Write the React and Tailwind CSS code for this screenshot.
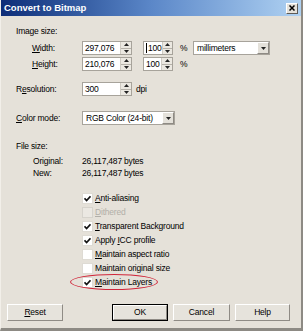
import React from "react";

const FONT = "font-['Liberation_Sans',Arial,sans-serif]";

function Tri({ down }) {
  return (
    <svg width="5" height="3" viewBox="0 0 5 3" className="block">
      <path d={down ? "M0 0H5L2.5 3Z" : "M0 3H5L2.5 0Z"} fill="#222" />
    </svg>
  );
}

function Spinner() {
  return (
    <div className="flex flex-col w-[11px] h-full border-l border-[#cfcbc3]">
      <div className="flex-1 flex items-center justify-center bg-[#ebe8e1] border-b border-[#b5b1a9]">
        <Tri />
      </div>
      <div className="flex-1 flex items-center justify-center bg-[#ebe8e1]">
        <Tri down />
      </div>
    </div>
  );
}

function SpinBox({ value, w, caret }) {
  return (
    <div className={`flex h-[14px] ${w} border border-[#a7a39b] bg-white`}>
      <div className="flex-1 flex items-center pl-[2px]">
        {caret && <span className="w-px h-[10px] bg-black mr-px" />}
        {value}
      </div>
      <Spinner />
    </div>
  );
}

function DropDown({ value, w }) {
  return (
    <div className={`flex h-[14px] ${w} border border-[#a7a39b] bg-white`}>
      <div className="flex-1 flex items-center pl-[3px]">{value}</div>
      <div className="w-[12px] h-full flex items-center justify-center bg-[#e4e1da] border border-t-white border-l-white border-r-[#8e8a84] border-b-[#8e8a84]">
        <Tri down />
      </div>
    </div>
  );
}

function U({ children }) {
  return <span className="underline underline-offset-[1px]">{children}</span>;
}

function Check({ checked, disabled, children }) {
  return (
    <div className="flex items-center h-[14px]">
      <div
        className={`w-[11px] h-[11px] flex items-center justify-center border ${
          disabled ? "bg-[#ebe8e2] border-[#d6d3cc]" : "bg-white border-[#dedbd4]"
        }`}
      >
        {checked && (
          <svg width="7" height="7" viewBox="0 0 7 7" className="block">
            <path d="M0.5 3.2L2.6 5.5L6.5 1.2" stroke="#111" strokeWidth="1.7" fill="none" />
          </svg>
        )}
      </div>
      <div className={`ml-[2px] ${disabled ? "text-[#b2afa8]" : ""}`}>{children}</div>
    </div>
  );
}

function Btn({ children, w, def }) {
  return (
    <div
      className={`h-[17px] ${w} flex items-center justify-center ${
        def ? "border border-black" : ""
      }`}
    >
      <div className="w-full h-full flex items-center justify-center bg-[#e6e3dc] border border-t-white border-l-white border-r-[#8f8b85] border-b-[#8f8b85]">
        {children}
      </div>
    </div>
  );
}

export default function App() {
  return (
    <div
      className={`${FONT} relative w-[303px] h-[331px] bg-[#e5e1d9] text-[8.5px] tracking-[-0.2px] leading-none whitespace-nowrap text-black flex flex-col border-r-2 border-b-[3px] border-r-[#8d8a84] border-b-[#8d8a84] border-l border-l-[#f2efe9] overflow-hidden`}
    >
      {/* Title bar */}
      <div className="h-[16px] flex items-center bg-gradient-to-r from-[#0e2d78] via-[#5b87c8] to-[#b0d2f2] pl-[3px] pr-[3px]">
        <div className="flex-1 text-white font-bold text-[9.5px] tracking-normal">
          Convert to Bitmap
        </div>
        <div className="w-[12px] h-[11px] flex items-center justify-center bg-[#e4e1da] border border-t-white border-l-white border-r-[#5e5b56] border-b-[#5e5b56]">
          <svg width="6" height="6" viewBox="0 0 6 6" className="block">
            <path d="M0.5 0.5L5.5 5.5M5.5 0.5L0.5 5.5" stroke="#000" strokeWidth="1.5" />
          </svg>
        </div>
      </div>

      <div className="flex flex-col pl-[15px]">
        <div className="mt-[10px] h-[11px] flex items-center">Image size:</div>

        <div className="mt-[4px] flex items-center">
          <div className="w-[66px] pl-[16px]">
            <U>W</U>idth:
          </div>
          <SpinBox value="297,076" w="w-[50px]" />
          <div className="ml-[11px]">
            <SpinBox value="100" w="w-[30px]" caret />
          </div>
          <div className="ml-[7px] w-[13px]">%</div>
          <DropDown value="millimeters" w="w-[77px]" />
        </div>

        <div className="mt-[2px] flex items-center">
          <div className="w-[66px] pl-[16px]">
            <U>H</U>eight:
          </div>
          <SpinBox value="210,076" w="w-[50px]" />
          <div className="ml-[11px]">
            <SpinBox value="100" w="w-[30px]" />
          </div>
          <div className="ml-[7px]">%</div>
        </div>

        <div className="mt-[11px] flex items-center">
          <div className="w-[66px]">
            R<U>e</U>solution:
          </div>
          <SpinBox value="300" w="w-[50px]" />
          <div className="ml-[4px]">dpi</div>
        </div>

        <div className="mt-[15px] flex items-center">
          <div className="w-[66px]">
            <U>C</U>olor mode:
          </div>
          <DropDown value="RGB Color (24-bit)" w="w-[93px]" />
        </div>

        <div className="mt-[16px] h-[11px] flex items-center">File size:</div>
        <div className="mt-[4px] h-[11px] flex items-center">
          <div className="w-[66px] pl-[17px]">Original:</div>
          <div>26,117,487 bytes</div>
        </div>
        <div className="mt-[1px] h-[11px] flex items-center">
          <div className="w-[66px] pl-[17px]">New:</div>
          <div>26,117,487 bytes</div>
        </div>

        <div className="mt-[12px] flex flex-col pl-[66px]">
          <Check checked>
            <U>A</U>nti-aliasing
          </Check>
          <Check disabled>
            <U>D</U>ithered
          </Check>
          <Check checked>
            <U>T</U>ransparent Background
          </Check>
          <Check checked>
            Apply <U>I</U>CC profile
          </Check>
          <Check>
            <U>M</U>aintain aspect ratio
          </Check>
          <Check>Maintain original size</Check>
          <div className="relative">
            <Check checked>
              <U>M</U>aintain Layers
            </Check>
            <div className="absolute left-[-12px] top-[-1px] w-[88px] h-[16px] rounded-[50%] border-[1.5px] border-[#d0263a]" />
          </div>
        </div>
      </div>

      <div className="mt-[15px] flex items-center pl-[6px]">
        <Btn w="w-[56px]">
          <U>R</U>eset
        </Btn>
        <div className="ml-[49px]">
          <Btn w="w-[56px]" def>
            OK
          </Btn>
        </div>
        <div className="ml-[5px]">
          <Btn w="w-[57px]">Cancel</Btn>
        </div>
        <div className="ml-[5px]">
          <Btn w="w-[55px]">Help</Btn>
        </div>
      </div>
    </div>
  );
}
